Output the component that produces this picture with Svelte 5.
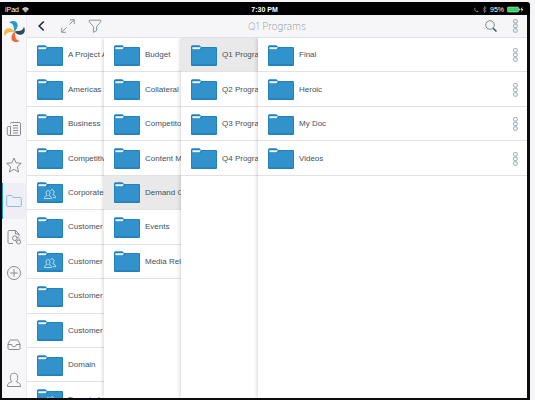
<script lang="ts">
  type Folder = { name: string; shared?: boolean };
  type Column = { folders: Folder[]; selected: number };

  const columns: Column[] = [
    {
      selected: -1,
      folders: [
        { name: 'A Project A' },
        { name: 'Americas Region' },
        { name: 'Business' },
        { name: 'Competitive' },
        { name: 'Corporate', shared: true },
        { name: 'Customer' },
        { name: 'Customer', shared: true },
        { name: 'Customer' },
        { name: 'Customer' },
        { name: 'Domain' },
        { name: 'Domain Int', shared: true },
      ],
    },
    {
      selected: 4,
      folders: [
        { name: 'Budget' },
        { name: 'Collateral' },
        { name: 'Competitor' },
        { name: 'Content Marketing' },
        { name: 'Demand Gen' },
        { name: 'Events' },
        { name: 'Media Relations' },
      ],
    },
    {
      selected: 0,
      folders: [
        { name: 'Q1 Programs' },
        { name: 'Q2 Programs' },
        { name: 'Q3 Programs' },
        { name: 'Q4 Programs' },
      ],
    },
    {
      selected: -1,
      folders: [{ name: 'Final' }, { name: 'Heroic' }, { name: 'My Doc' }, { name: 'Videos' }],
    },
  ];

  let active = $state('files');
</script>

{#snippet folderIcon(shared: boolean)}
  <svg class="folder" viewBox="0 0 26 21" aria-hidden="true">
    <path d="M0 1.800Q0 .2 1.400.2h7L10.200 2H25q1 0 1 1v17q0 1-1 1H1q-1 0-1-1z" fill="#2182bd" />
    <path d="M1 5h8.800l1.600-2H25v16.200H1z" fill="#3292cb" />
    <path d="M1.400 2.200h8.400L8.800 4.200H1.400z" fill="#f1f8fc" />
    {#if shared}
      <g fill="none" stroke="#c9e5f5" stroke-width=".9" stroke-linejoin="round">
        <path d="M7.500 16.500c0-2 1-2.400 2.800-3-.9-.7-1.300-1.600-1.300-2.600 0-1.500.8-2.300 2-2.300s2 .8 2 2.300c0 1-.4 1.900-1.200 2.600 1.800.6 2.700 1.200 2.700 3z" />
        <path d="M13.500 8.500c.4-.5.900-.7 1.500-.7 1.200 0 2 .8 2 2.300 0 1-.4 1.900-1.200 2.500 1.800.7 2.800 1.200 2.800 3.100h-2.800" />
      </g>
    {/if}
  </svg>
{/snippet}

{#snippet more()}
  <svg class="more" viewBox="0 0 5 14" aria-hidden="true">
    <g fill="none" stroke="#929ea6" stroke-width=".9">
      <rect x=".6" y=".6" width="3.600" height="3.400" rx=".8" />
      <rect x=".6" y="5.200" width="3.600" height="3.400" rx=".8" />
      <rect x=".6" y="9.800" width="3.600" height="3.400" rx=".8" />
    </g>
  </svg>
{/snippet}

{#snippet navIcon(id: string)}
  <svg viewBox="0 0 16 16" aria-hidden="true">
    {#if id === 'news'}
      <path d="M4.500 2.700c0-.7.500-1.200 1.200-1.200h7.600c.7 0 1.200.5 1.200 1.200v10.600c0 .7-.5 1.200-1.200 1.200H3a1.700 1.700 0 0 1-1.700-1.700V6.500c0-.6.400-1 1-1h2.200v7.500c0 .8-.6 1.500-1.400 1.500M7 4.500h5M7 7h5M7 9.500h5M7 12h5" />
    {:else if id === 'star'}
      <path d="M8 1l2.100 4.800 5.200.5-3.900 3.500 1.100 5.200L8 12.300 3.500 15l1.100-5.200L.7 6.300l5.200-.5z" />
    {:else if id === 'files'}
      <path d="M.7 12.500v-9c0-.6.400-1 1-1h4l1.400 2h7.200c.6 0 1 .4 1 1v7c0 .6-.4 1-1 1H1.700c-.6 0-1-.4-1-1z" />
    {:else if id === 'doc'}
      <path d="M7 14.500H3.200c-.7 0-1.200-.5-1.200-1.200V2.700c0-.7.5-1.200 1.200-1.200h6.300l3.500 3.500v2.500M9.500 1.500V5H13" />
      <circle cx="8.800" cy="9.200" r="2.300" />
      <path d="M10.600 8l2.200 1.200c1 .6 1 1.400.5 2M9.500 11.400l1.200 2" />
      <circle cx="12.600" cy="13" r="2" />
    {:else if id === 'add'}
      <circle cx="8" cy="8" r="6.500" />
      <path d="M8 4.200v7.600M4.200 8h7.600" />
    {:else if id === 'inbox'}
      <path d="M2 8l1.800-3.400c.2-.4.500-.6 1-.6h6.400c.5 0 .8.2 1 .6L14 8v4.300c0 .7-.4 1.200-1.200 1.200H3.200C2.400 13.500 2 13 2 12.300zM2 8.500h3.700c.3 1.600 1 2.200 2.300 2.200s2-.6 2.300-2.200H14" />
    {:else}
      <path d="M1.500 14.500c0-3 1.200-3.700 4.400-4.800C4.700 8.500 4.300 7.200 4.300 5.200 4.300 2.700 5.700 1.200 8 1.200s3.700 1.500 3.700 4c0 2-.4 3.300-1.600 4.500 3.200 1.100 4.400 1.800 4.400 4.800z" />
    {/if}
  </svg>
{/snippet}

{#snippet navButton(id: string, label: string)}
  <button class="nav-item" class:active={active === id} aria-label={label} onclick={() => (active = id)}>
    {@render navIcon(id)}
  </button>
{/snippet}

<div class="device">
  <div class="status-bar">
    <div class="carrier">
      <span>iPad</span>
      <svg width="7" height="6" viewBox="0 0 7 6" aria-hidden="true">
        <path d="M3.500 5.800L.2 2Q3.500-.9 6.800 2z" fill="#b5b5b5" />
        <path d="M.4 2.100C2.200.3 4.800.3 6.600 2.100" fill="none" stroke="#fff" stroke-width=".8" />
      </svg>
    </div>
    <strong>7:30 PM</strong>
    <div class="power">
      <svg width="5" height="6" viewBox="0 0 5 6" aria-hidden="true">
        <path d="M1 .8A2.700 2.700 0 0 0 4.400 4.500" fill="none" stroke="#8a8a8a" />
      </svg>
      <svg width="5" height="7" viewBox="0 0 5 7" aria-hidden="true">
        <path d="M.8 2l3.400 3-1.700 1.500V.5L4.200 2 .8 5" fill="none" stroke="#8a8a8a" stroke-width=".7" />
      </svg>
      <span>95%</span>
      <svg width="17" height="7" viewBox="0 0 17 7" aria-hidden="true">
        <rect x=".5" y="1" width="11" height="5" rx=".8" fill="#35d367" stroke="#b9e8c5" stroke-width=".6" />
        <path d="M12.300 2.700v1.600" stroke="#fff" />
        <path d="M15.500.8l-2 3h1.300l-.5 2.500 2-3.200H15z" fill="#fff" />
      </svg>
    </div>
  </div>

  <div class="app">
    <nav class="sidebar">
      <a class="logo" href="#home" aria-label="Home">
        <svg viewBox="0 0 24 24" aria-hidden="true">
          <path d="M6.500 2.500C11-.5 15.500 1.500 15.300 5.800c-.1 2.500-1.500 4.200-3.300 6.200C10.500 9 13 4.500 6.500 2.500z" fill="#2a9ad2" />
          <path d="M21.900 7c2.300 4.500-.3 8.800-4.500 8.500-2.300-.2-3.900-1.700-5.400-3.500 3.500-1.500 8 1 9.900-5z" fill="#33495a" />
          <path d="M17.500 22c-4.500 2.600-9 .5-8.800-3.700.1-2.300 1.500-4.300 3.300-6.300 1.500 3.500-1 8 5.500 10z" fill="#ee6a35" />
          <path d="M2 17C-.3 12.500 2.300 8.300 6.500 8.600c2.500.2 3.800 1.400 5.500 3.400C8.500 13.500 4 11 2 17z" fill="#f8b645" />
        </svg>
      </a>
      {@render navButton('news', 'News')}
      {@render navButton('star', 'Favorites')}
      {@render navButton('files', 'Files')}
      {@render navButton('doc', 'Documents')}
      {@render navButton('add', 'Add')}
      <div class="spacer"></div>
      {@render navButton('inbox', 'Inbox')}
      {@render navButton('profile', 'Profile')}
    </nav>

    <main>
      <header>
        <div class="tools">
          <button class="tool" aria-label="Back">
            <svg width="8" height="12" viewBox="0 0 8 12"><path d="M6.700 1.500L2.200 6l4.500 4.500" fill="none" stroke="#1d2a35" stroke-width="1.600" /></svg>
          </button>
          <button class="tool" aria-label="Expand">
            <svg width="14" height="14" viewBox="0 0 14 14"><path d="M8.500 5.500L13 1M9 .7h4.300V5M5.500 8.500L1 13M.7 9v4.300H5" fill="none" stroke="#7f8b94" stroke-width=".9" /></svg>
          </button>
          <button class="tool" aria-label="Filter">
            <svg width="14" height="14" viewBox="0 0 14 14"><path d="M1.200 1.200h11.600v1.600L8.600 7.500v4.300l-3.200 1.500V7.500L1.200 2.800z" fill="none" stroke="#7f8b94" stroke-width=".9" /></svg>
          </button>
        </div>
        <h1>Q1 Programs</h1>
        <div class="actions">
          <button class="action" aria-label="Search">
            <svg width="12" height="12" viewBox="0 0 12 12"><circle cx="5" cy="5" r="4.300" fill="none" stroke="#6d7b85" stroke-width=".9" /><path d="M8.200 8.200l3.300 3.300" stroke="#43535f" stroke-width="1.500" /></svg>
          </button>
          <button class="action" aria-label="More">{@render more()}</button>
        </div>
      </header>

      <div class="columns">
        {#each columns as column, c}
          <ul class="column">
            {#each column.folders as folder, i}
              <li class:selected={i === column.selected}>
                <button class="row">
                  {@render folderIcon(!!folder.shared)}
                  <span>{folder.name}</span>
                </button>
                {#if c === columns.length - 1}
                  <button class="action" aria-label="More options for {folder.name}">{@render more()}</button>
                {/if}
              </li>
            {/each}
          </ul>
        {/each}
      </div>
    </main>
  </div>
</div>

<style>
  :global(body) { background: #f5f5f8; }
  .device {
    box-sizing: border-box;
    display: flex;
    flex-direction: column;
    height: 100vh;
    border: 2px solid #f5f5f8;
    border-width: 2px 5px 0 0;
    font-family: "Liberation Sans", Arial, sans-serif;
    background: #f5f5f8;
  }
  button {
    display: flex;
    align-items: center;
    padding: 0;
    border: none;
    background: none;
    font: inherit;
    color: inherit;
    cursor: pointer;
  }
  svg { display: block; flex: none; }

  .status-bar {
    display: grid;
    grid-template-columns: 1fr auto 1fr;
    align-items: center;
    height: 13px;
    padding: 2px 6px 0 5px;
    box-sizing: border-box;
    border-radius: 0 3px 0 0;
    background: #000;
    color: #fff;
    font-size: 7px;
    line-height: 8px;
  }
  .carrier, .power { display: flex; align-items: center; gap: 3px; }
  .power { justify-content: flex-end; }

  .app {
    display: flex;
    flex: 1;
    min-height: 0;
    border: 2px solid #0b0b0d;
    border-width: 0 3px 2px 2px;
  }
  .sidebar {
    display: flex;
    flex-direction: column;
    width: 25px;
    box-sizing: border-box;
    border-right: 1px solid #ececef;
    background: #f7f7f9;
  }
  .logo { display: flex; justify-content: center; align-items: center; height: 32px; margin-bottom: 64px; }
  .logo svg { width: 23px; height: 23px; }
  .nav-item { justify-content: center; height: 36px; color: #7a7f83; }
  .nav-item svg { width: 16px; height: 16px; fill: none; stroke: currentColor; stroke-width: 0.9; }
  .nav-item.active { background: #eeeef4; box-shadow: inset 1px 0 #1e9ad6; color: #7db9dc; }
  .spacer { flex: 1; }

  main { display: flex; flex-direction: column; flex: 1; min-width: 0; }
  header {
    display: grid;
    grid-template-columns: 1fr auto 1fr;
    align-items: center;
    height: 23px;
    box-sizing: border-box;
    border-bottom: 1px solid #e3e3e5;
    background: #f6f6f9;
  }
  .tools, .actions { display: flex; }
  .actions { justify-content: flex-end; }
  .tool { justify-content: center; width: 27px; height: 22px; }
  .action { justify-content: center; width: 24px; height: 22px; }
  h1 { margin: 0; font: 200 10px/14px Inter, sans-serif; color: #8d979e; }
  .more { width: 5px; height: 14px; }

  .columns { display: flex; flex: 1; min-height: 0; overflow: hidden; background: #fff; }
  .column {
    position: relative;
    display: grid;
    /* not quite ten rows and a half, so the next one peeks in at the bottom */
    grid-auto-rows: calc(100% / 10.45);
    flex: none;
    width: 77px;
    height: 100%;
    margin: 0;
    padding: 0;
    overflow: hidden;
    list-style: none;
    background: #fff;
    box-shadow: -1px 0 4px rgba(0, 0, 0, 0.16);
  }
  .column:first-child { box-shadow: none; }
  .column:last-child { flex: 1; width: auto; }
  li {
    display: flex;
    align-items: center;
    min-width: 0;
    box-sizing: border-box;
    padding-top: 1px;
    border-bottom: 1px solid #e2e2e2;
  }
  li.selected { background: #e9e9e9; }
  .row {
    flex: 1;
    gap: 5px;
    min-width: 0;
    height: 100%;
    padding-left: 10px;
    overflow: hidden;
    font-size: 8px;
    line-height: 10px;
    color: #41525f;
    white-space: nowrap;
  }
  .folder { width: 26px; height: 21px; }
</style>
